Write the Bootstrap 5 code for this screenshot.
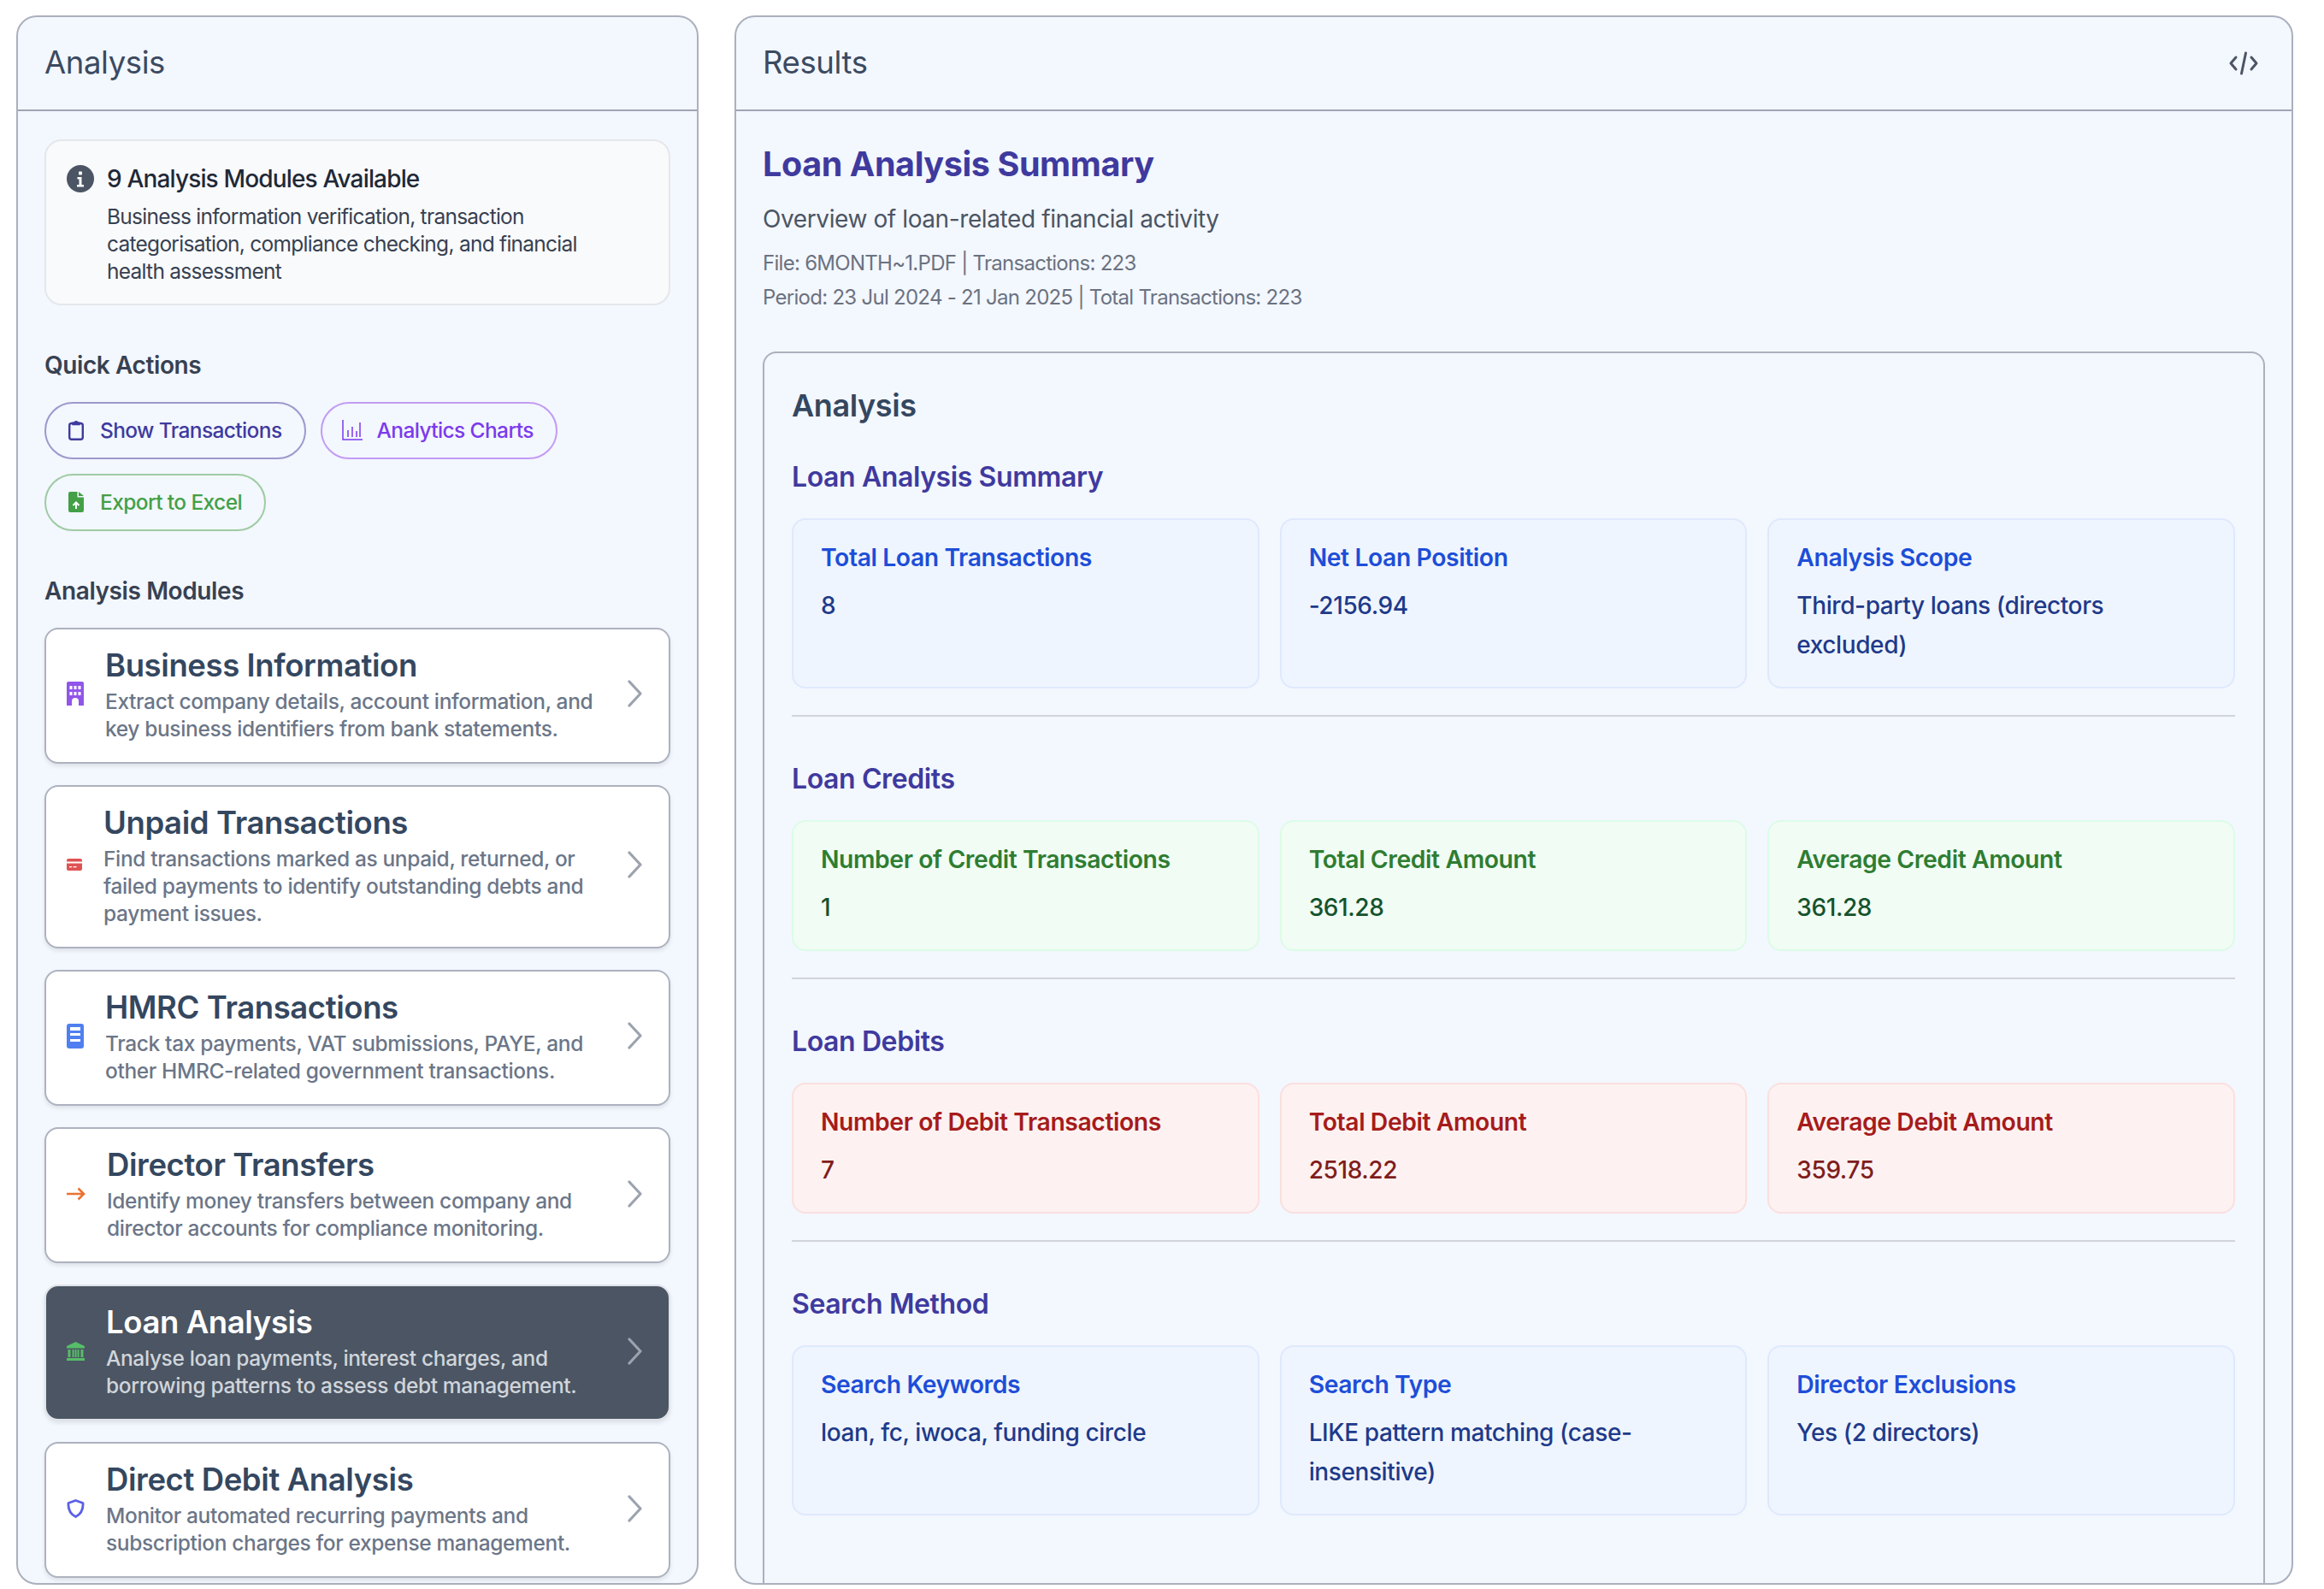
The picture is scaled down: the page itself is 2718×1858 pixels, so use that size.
<!doctype html>
<html lang="en">
<head>
<meta charset="utf-8">
<title>Analysis</title>
<link href="https://cdn.jsdelivr.net/npm/bootstrap@5.3.0/dist/css/bootstrap.min.css" rel="stylesheet">
<style>
html,body{height:1858px;overflow:hidden;background:#fff}
body{font-family:"Inter","Noto Sans","Liberation Sans",sans-serif;letter-spacing:-.025em;padding:18px 36px 5px 19px;color:#1f2937}
.shell{height:1835px;gap:42px}
.side{width:798px;flex:none}
.main-col{flex:1;min-width:0}
.pane{height:100%;background:#f3f7fe;border:2px solid #abb0bd;border-radius:24px;overflow:hidden}
.pane>.card-header{flex:none;height:109.5px;background:transparent;border-bottom:2px solid #9fa5b3;padding:0 31px;border-radius:0;font-size:36.5px;font-weight:400;color:#3b4a60}
.pane>.card-body{padding:33px 31px;overflow:hidden}
.hdr-ico{margin-right:8px}
.info-box{background:#f9fafb;border:2px solid #e5e7eb;border-radius:20px;padding:28px 50px 22px 24px;gap:15px}
.info-title{font-size:28px;line-height:32px;font-weight:500;color:#1f2937;margin-bottom:12px;letter-spacing:-.03em}
.info-text{font-size:24.5px;line-height:32px;color:#374151;letter-spacing:-.03em}
.sec-label{font-size:28px;line-height:36px;font-weight:600;color:#374151;margin:52px 0 25px}
.act-btn{--bs-btn-padding-x:26px;--bs-btn-padding-y:0;height:67px;font-size:24.5px;font-weight:500;background:transparent;border-width:2px;gap:19px;letter-spacing:-.025em}
.act-indigo{color:#3f3a9e;border-color:#9c99cd}
.act-violet{padding-left:23px;color:#7c3aed;border-color:#c29cf3;gap:17px}
.act-green{color:#43a047;border-color:#9fcba3}
.act-wrap{gap:17px}
.mod-list{gap:25.2px;margin-top:2px}
.mod-card{background:#fff;border:2px solid #adb2bf;border-radius:16px;box-shadow:0 3px 5px rgba(0,0,0,.09);padding:19px 30px 23px 24px;gap:25px}
.mod-ico{flex:none}
.mod-title{font-size:36.5px;line-height:46px;font-weight:600;color:#34475f;margin-bottom:3px}
.mod-text{font-size:24.5px;line-height:32px;font-weight:500;color:#6b7688;letter-spacing:-.015em}
.mod-chev{flex:none;margin-left:auto}
.mod-on{background:#4b5563;border-color:#dfe2e8}
.mod-on .mod-title{color:#fff}
.mod-on .mod-text{color:#d1d5db}
.res-head{font-size:37px}
.res-title{font-size:39.5px;line-height:48px;font-weight:700;color:#3f3a9e;margin:5px 0 20px}
.res-sub{font-size:28px;line-height:40px;color:#4b5563;margin-bottom:12px}
.res-meta{font-size:24px;line-height:40px;color:#6b7280;letter-spacing:-.03em}
.inner-box{margin-top:43px;border:2px solid #abb0bd;border-radius:16px;padding:37px 33px 40px 32px;height:1500px}
.inner-title{font-size:36px;line-height:48px;font-weight:600;color:#34475f;margin-bottom:38px}
.grp-title{font-size:32px;line-height:44px;font-weight:600;color:#3f3a9e;margin-bottom:26px}
.stat-row{--bs-gutter-x:24px;--bs-gutter-y:0}
.stat-box{height:100%;border:2px solid;border-radius:16px;padding:25px 32px 26px}
.stat-label{font-size:28.3px;line-height:38px;font-weight:600;margin-bottom:14px}
.stat-val{font-size:28px;line-height:46px;font-weight:500}
.tone-b{background:#eff5fe;border-color:#dfe9fd}
.tone-b .stat-label{color:#1d4ed8}
.tone-b .stat-val{color:#1e3a8a}
.tone-g{background:#f1fcf4;border-color:#dcfce7}
.tone-g .stat-label{color:#2e7d32}
.tone-g .stat-val{color:#14532d}
.tone-r{background:#fdf2f1;border-color:#fbdfdf}
.tone-r .stat-label{color:#a61b1b}
.tone-r .stat-val{color:#7f1d1d}
.grp-rule{border:0;border-top:2px solid #d1d5db;opacity:1;margin:31.5px 0 50.5px}
</style>
</head>
<body>
<div class="d-flex shell">
  <div class="side">
    <div class="card pane">
      <div class="card-header d-flex align-items-center">Analysis</div>
      <div class="card-body">
        <div class="info-box d-flex">
          <svg width="32" height="32" viewBox="0 0 32 32" style="flex:none"><circle cx="16" cy="16" r="16" fill="#4b5563"/><rect x="14" y="7.5" width="4" height="4" rx="1" fill="#fff"/><path d="M12.5 14h5v9h2.5v2.500h-8V23h2.5v-6.500h-2z" fill="#fff"/></svg>
          <div>
            <div class="info-title">9 Analysis Modules Available</div>
            <div class="info-text">Business information verification, transaction categorisation, compliance checking, and financial health assessment</div>
          </div>
        </div>

        <div class="sec-label">Quick Actions</div>
        <div class="d-flex flex-wrap act-wrap">
          <button class="btn rounded-pill act-btn act-indigo d-inline-flex align-items-center">
            <svg width="18" height="24" viewBox="0 0 18 24" fill="none" stroke="currentColor" stroke-width="2.400"><rect x="1.200" y="4" width="15.600" height="18.800" rx="2.500"/><path d="M5.500 5V3.800h2a1.500 1.500 0 0 1 3 0h2V5z" fill="currentColor"/></svg>Show Transactions</button>
          <button class="btn rounded-pill act-btn act-violet d-inline-flex align-items-center">
            <svg width="24" height="24" viewBox="0 0 24 24" fill="none" stroke="currentColor" stroke-width="1.500"><path d="M1 0v23h23M7 12v8M12 8v12M17 13v7M21 3v17"/></svg>Analytics Charts</button>
          <button class="btn rounded-pill act-btn act-green d-inline-flex align-items-center">
            <svg width="18" height="24" viewBox="0 0 18 24"><path fill="currentColor" d="M2 0h8.500v6.500H18V22a2 2 0 0 1-2 2H2a2 2 0 0 1-2-2V2a2 2 0 0 1 2-2z"/><path fill="currentColor" d="M12 0l6 5h-6z"/><path d="M9 20v-7M5.500 16L9 12.500l3.500 3.500" stroke="#fff" stroke-width="2" fill="none"/></svg>Export to Excel</button>
        </div>

        <div class="sec-label">Analysis Modules</div>
        <div class="d-flex flex-column mod-list">

          <div class="mod-card d-flex align-items-center">
            <svg class="mod-ico" width="20" height="28" viewBox="0 0 20 28"><path fill="#9155ea" fill-rule="evenodd" d="M2 0h16a2 2 0 0 1 2 2v26h-6v-5a4 4 0 0 0-8 0v5H0V2a2 2 0 0 1 2-2zM3.500 5v4h3V5zm5 0v4h3V5zm5 0v4h3V5zm-10 7v4h3v-4zm5 0v4h3v-4zm5 0v4h3v-4z"/></svg>
            <div><div class="mod-title">Business Information</div><div class="mod-text">Extract company details, account information, and key business identifiers from bank statements.</div></div>
            <svg class="mod-chev" width="18" height="32" viewBox="0 0 18 32" fill="none" stroke="#9ca3af" stroke-width="3.200" stroke-linecap="round" stroke-linejoin="round"><path d="M2 2l13 14L2 30"/></svg>
          </div>

          <div class="mod-card d-flex align-items-center">
            <svg class="mod-ico" width="18" height="14" viewBox="0 0 18 14"><path fill="#e05252" d="M2 0h14a2 2 0 0 1 2 2v1.500H0V2a2 2 0 0 1 2-2zM0 5.500h18V12a2 2 0 0 1-2 2H2a2 2 0 0 1-2-2z"/><path fill="#fff" d="M3 9h3v1.200H3zM7.500 9h4v1.200h-4z"/></svg>
            <div><div class="mod-title">Unpaid Transactions</div><div class="mod-text">Find transactions marked as unpaid, returned, or failed payments to identify outstanding debts and payment issues.</div></div>
            <svg class="mod-chev" width="18" height="32" viewBox="0 0 18 32" fill="none" stroke="#9ca3af" stroke-width="3.200" stroke-linecap="round" stroke-linejoin="round"><path d="M2 2l13 14L2 30"/></svg>
          </div>

          <div class="mod-card d-flex align-items-center">
            <svg class="mod-ico" width="20" height="29" viewBox="0 0 20 29"><rect width="20" height="29" rx="3" fill="#4f7ff0"/><path fill="#fff" d="M4 4h12v4H4zM4 11h12v3H4zM4 18h12v3H4z"/></svg>
            <div><div class="mod-title">HMRC Transactions</div><div class="mod-text">Track tax payments, VAT submissions, PAYE, and other HMRC-related government transactions.</div></div>
            <svg class="mod-chev" width="18" height="32" viewBox="0 0 18 32" fill="none" stroke="#9ca3af" stroke-width="3.200" stroke-linecap="round" stroke-linejoin="round"><path d="M2 2l13 14L2 30"/></svg>
          </div>

          <div class="mod-card d-flex align-items-center">
            <svg class="mod-ico" width="22" height="16" viewBox="0 0 22 16" fill="none" stroke="#ea7231" stroke-width="2.600"><path d="M0 8h20M13.500 1.500L20 8l-6.500 6.500"/></svg>
            <div><div class="mod-title">Director Transfers</div><div class="mod-text">Identify money transfers between company and director accounts for compliance monitoring.</div></div>
            <svg class="mod-chev" width="18" height="32" viewBox="0 0 18 32" fill="none" stroke="#9ca3af" stroke-width="3.200" stroke-linecap="round" stroke-linejoin="round"><path d="M2 2l13 14L2 30"/></svg>
          </div>

          <div class="mod-card mod-on d-flex align-items-center">
            <svg class="mod-ico" width="21" height="22" viewBox="0 0 21 22"><path fill="#56bd68" d="M10.500 0L21 5v2.500H0V5zM1.500 9h3v9h-3zM6.500 9H8.500v9h-2zM9.500 9h2v9h-2zM12.500 9h2v9h-2zM16.500 9h3v9h-3zM0 19h21v3H0z"/></svg>
            <div><div class="mod-title">Loan Analysis</div><div class="mod-text">Analyse loan payments, interest charges, and borrowing patterns to assess debt management.</div></div>
            <svg class="mod-chev" width="18" height="32" viewBox="0 0 18 32" fill="none" stroke="#9ca3af" stroke-width="3.200" stroke-linecap="round" stroke-linejoin="round"><path d="M2 2l13 14L2 30"/></svg>
          </div>

          <div class="mod-card d-flex align-items-center">
            <svg class="mod-ico" width="21" height="22" viewBox="0 0 21 22" fill="none" stroke="#5a60e6" stroke-width="2.800" stroke-linejoin="round"><path d="M10.500 1.500l8.500 3c.500 7-1.500 12.500-8.500 16C3.500 17 1.500 11.500 2 4.500z"/></svg>
            <div><div class="mod-title">Direct Debit Analysis</div><div class="mod-text">Monitor automated recurring payments and subscription charges for expense management.</div></div>
            <svg class="mod-chev" width="18" height="32" viewBox="0 0 18 32" fill="none" stroke="#9ca3af" stroke-width="3.200" stroke-linecap="round" stroke-linejoin="round"><path d="M2 2l13 14L2 30"/></svg>
          </div>
        </div>
      </div>
    </div>
  </div>

  <div class="main-col">
    <div class="card pane">
      <div class="card-header res-head d-flex align-items-center justify-content-between">Results
        <svg class="hdr-ico" width="34" height="28" viewBox="0 0 34 28" fill="none" stroke="#4b5563" stroke-width="3" stroke-linecap="round" stroke-linejoin="round"><path d="M8 7l-6 7 6 7M26 7l6 7-6 7M19.500 2l-5 24"/></svg>
      </div>
      <div class="card-body">
        <h1 class="res-title">Loan Analysis Summary</h1>
        <div class="res-sub">Overview of loan-related financial activity</div>
        <div class="res-meta">File: 6MONTH~1.PDF | Transactions: 223</div>
        <div class="res-meta">Period: 23 Jul 2024 - 21 Jan 2025 | Total Transactions: 223</div>

        <div class="inner-box">
          <div class="inner-title">Analysis</div>

          <div class="grp-title">Loan Analysis Summary</div>
          <div class="row stat-row">
            <div class="col-4"><div class="stat-box tone-b"><div class="stat-label">Total Loan Transactions</div><div class="stat-val">8</div></div></div>
            <div class="col-4"><div class="stat-box tone-b"><div class="stat-label">Net Loan Position</div><div class="stat-val">-2156.94</div></div></div>
            <div class="col-4"><div class="stat-box tone-b"><div class="stat-label">Analysis Scope</div><div class="stat-val">Third-party loans (directors excluded)</div></div></div>
          </div>
          <hr class="grp-rule">

          <div class="grp-title">Loan Credits</div>
          <div class="row stat-row">
            <div class="col-4"><div class="stat-box tone-g"><div class="stat-label">Number of Credit Transactions</div><div class="stat-val">1</div></div></div>
            <div class="col-4"><div class="stat-box tone-g"><div class="stat-label">Total Credit Amount</div><div class="stat-val">361.28</div></div></div>
            <div class="col-4"><div class="stat-box tone-g"><div class="stat-label">Average Credit Amount</div><div class="stat-val">361.28</div></div></div>
          </div>
          <hr class="grp-rule">

          <div class="grp-title">Loan Debits</div>
          <div class="row stat-row">
            <div class="col-4"><div class="stat-box tone-r"><div class="stat-label">Number of Debit Transactions</div><div class="stat-val">7</div></div></div>
            <div class="col-4"><div class="stat-box tone-r"><div class="stat-label">Total Debit Amount</div><div class="stat-val">2518.22</div></div></div>
            <div class="col-4"><div class="stat-box tone-r"><div class="stat-label">Average Debit Amount</div><div class="stat-val">359.75</div></div></div>
          </div>
          <hr class="grp-rule">

          <div class="grp-title">Search Method</div>
          <div class="row stat-row">
            <div class="col-4"><div class="stat-box tone-b"><div class="stat-label">Search Keywords</div><div class="stat-val">loan, fc, iwoca, funding circle</div></div></div>
            <div class="col-4"><div class="stat-box tone-b"><div class="stat-label">Search Type</div><div class="stat-val">LIKE pattern matching (case-insensitive)</div></div></div>
            <div class="col-4"><div class="stat-box tone-b"><div class="stat-label">Director Exclusions</div><div class="stat-val">Yes (2 directors)</div></div></div>
          </div>
        </div>
      </div>
    </div>
  </div>
</div>
<script src="https://cdn.jsdelivr.net/npm/bootstrap@5.3.0/dist/js/bootstrap.bundle.min.js"></script>
</body>
</html>
